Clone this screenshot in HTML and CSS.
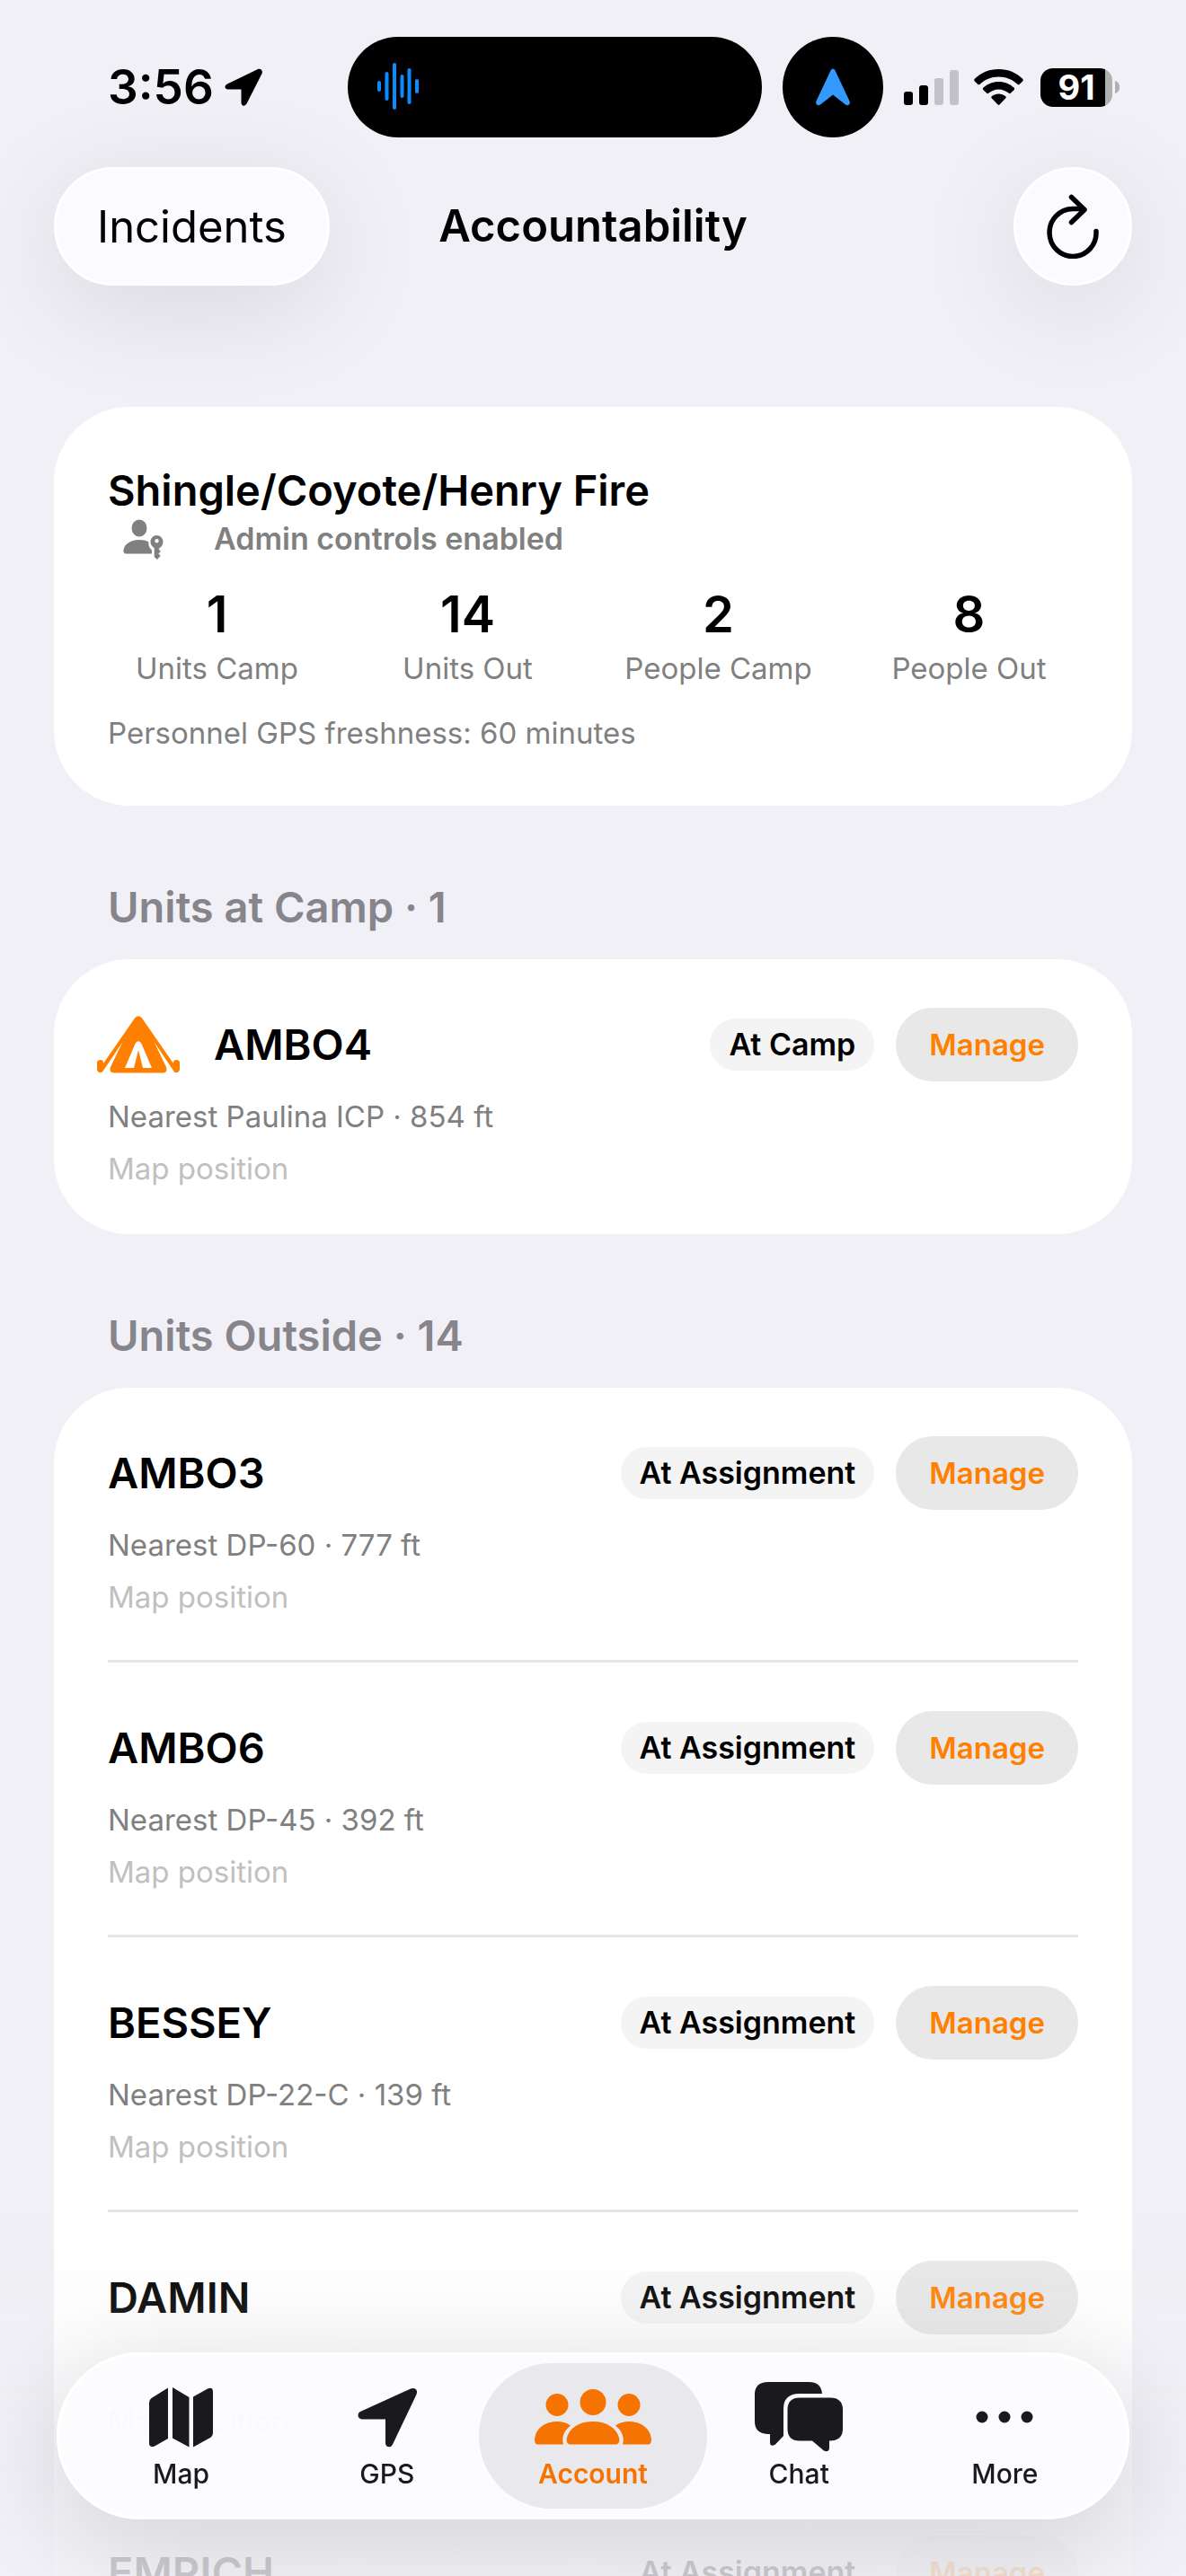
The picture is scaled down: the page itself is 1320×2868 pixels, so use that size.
FILE: index.html
```html
<!DOCTYPE html>
<html lang="en">
<head>
    <meta charset="UTF-8">
    <meta name="viewport" content="width=device-width, initial-scale=1.0">
    <title>Accountability</title>
    <link rel="stylesheet" href="styles.css">
</head>
<body>
    <!-- Status bar -->
    <div class="status-bar">
        <div class="time">
            <span>3:56</span>
            <svg width="43" height="42" viewBox="0 0 43 42"><path d="M36.500 1.200 L3 17.500 C-1 19.500 0 23.500 4 23.500 H18.500 V38 C18.500 42.500 23 43 25 38.500 L41.500 6 C43 2.500 40 -.5 36.500 1.200Z"/></svg>
        </div>
        <div class="island">
            <svg width="46" height="54" viewBox="0 0 46 54" fill="none" stroke="#0a8cff" stroke-width="4" stroke-linecap="round">
                <path d="M2 22v8M10.500 12v28M19 2v48M27.500 15v22M35.500 8v36M44 20v12"/>
            </svg>
        </div>
        <div class="nav-dot">
            <svg width="38" height="42" viewBox="0 0 38 42"><path fill="#3399ff" d="M16.500 2.500C17.500-.3 20.500-.3 21.500 2.500L37.500 36.500C39 40 36 42.500 33 40.500L19 29.500 5 40.500C2 42.500-1 40 .5 36.500Z"/></svg>
        </div>
        <svg class="signal" width="61" height="40" viewBox="0 0 61 40">
            <rect y="25" width="10" height="15" rx="3"/>
            <rect x="17" y="18" width="10" height="22" rx="3"/>
            <rect x="34" y="10" width="10" height="30" rx="3" fill="#c2c1c7"/>
            <rect x="51" y="1" width="10" height="39" rx="3" fill="#c2c1c7"/>
        </svg>
        <svg class="wifi" width="55" height="40" viewBox="0 0 55 40">
            <path d="M27.500 0C17 0 7.500 4 .8 10.800c-.8.8-.8 1.800 0 2.600l3.400 3.400c.7.700 1.700.7 2.500 0C12 11.500 19.500 8.500 27.500 8.500s15.500 3 20.800 8.300c.8.700 1.800.7 2.500 0l3.400-3.400c.8-.8.8-1.800 0-2.600C47.500 4 38 0 27.500 0Z"/>
            <path d="M27.500 14c-6.500 0-12.500 2.500-17 6.600-.8.7-.8 1.800 0 2.600l3.500 3.400c.7.700 1.700.7 2.500 0 3-2.600 6.800-4.200 11-4.200s8 1.600 11 4.200c.8.700 1.800.7 2.500 0l3.500-3.400c.8-.8.8-1.900 0-2.600-4.500-4.100-10.500-6.600-17-6.600Z"/>
            <path d="M27.500 27.500c-2.800 0-5.400 1-7.500 2.500-.9.700-.9 1.800-.1 2.600l6.400 6.700c.7.700 1.700.7 2.400 0l6.400-6.700c.8-.8.8-1.900-.1-2.600-2.100-1.500-4.700-2.500-7.500-2.500Z"/>
        </svg>
        <div class="battery">
            <span class="battery-level">91</span>
            <svg width="5" height="14" viewBox="0 0 5 14"><path fill="#b0b0b4" d="M0 0C7 2 7 12 0 14Z"/></svg>
        </div>
    </div>

    <!-- Navigation bar -->
    <header class="nav-bar">
        <button class="glass back">Incidents</button>
        <h1>Accountability</h1>
        <button class="glass refresh" aria-label="Refresh">
            <svg width="60" height="72" viewBox="0 0 60 72" fill="none" stroke="#000" stroke-width="5.500" stroke-linecap="round" stroke-linejoin="round">
                <path d="M56 41.500A26 26.500 0 1 1 30 16.500H41M28.500 3.500L43 17.500 28.500 31.500"/>
            </svg>
        </button>
    </header>

    <main>
        <section class="card summary">
            <h2>Shingle/Coyote/Henry Fire</h2>
            <div class="admin">
                <svg class="label-icon" width="92" height="48" viewBox="0 0 92 48" fill="#808080">
                    <ellipse cx="47" cy="12" rx="8.500" ry="9.500"/>
                    <path d="M33 40.500C30 40.500 29 38.500 29.500 36 31 29 38 25 47 25c4 0 7.500.8 10.300 2.300C57 32 59 35 61 36.500V40.500Z"/>
                    <path fill-rule="evenodd" d="M66.500 20c-4 0-7 3.300-7 7.300 0 3 1.700 5.600 4.200 6.700V44l3 3 4-4-2.300-2.600 2.500-2.400-2-2.200V34.500c2.700-1 4.600-4 4.600-7.200 0-4-3-7.300-7-7.300Zm0 4a2.200 2.200 0 1 1 0 4.400 2.200 2.200 0 0 1 0-4.400Z"/>
                </svg>
                <span>Admin controls enabled</span>
            </div>
            <div class="stats">
                <div class="stat"><strong>1</strong><span>Units Camp</span></div>
                <div class="stat"><strong>14</strong><span>Units Out</span></div>
                <div class="stat"><strong>2</strong><span>People Camp</span></div>
                <div class="stat"><strong>8</strong><span>People Out</span></div>
            </div>
            <p class="detail">Personnel GPS freshness: 60 minutes</p>
        </section>

        <h2 class="section-title">Units at Camp · 1</h2>
        <section class="card">
            <article class="unit">
                <div class="unit-head">
                    <svg class="label-icon" width="92" height="64" viewBox="0 0 92 64">
                        <path fill="#ff8000" fill-rule="evenodd" d="M42 2.500Q46 -2 50 2.500L85 53V51Q86 48.500 89 49 92 49.500 92 52V60Q90 65 86 62.500L63.500 29 77 57Q79 63 73 63.500H19Q13 63 15 57L28.500 29 6 62.500Q2 65 0 60V52Q0 49.500 3 49 6 48.500 7 51V53ZM43 30L31 58H41L46 38 51 58H61L49 30Q46 26.500 43 30Z"/>
                    </svg>
                    <h3>AMBO4</h3>
                    <span class="chip">At Camp</span>
                    <button class="manage">Manage</button>
                </div>
                <p class="detail">Nearest Paulina ICP · 854 ft</p>
                <p class="detail source">Map position</p>
            </article>
        </section>

        <h2 class="section-title">Units Outside · 14</h2>
        <section class="card">
            <article class="unit">
                <div class="unit-head">
                    <h3>AMBO3</h3>
                    <span class="chip">At Assignment</span>
                    <button class="manage">Manage</button>
                </div>
                <p class="detail">Nearest DP-60 · 777 ft</p>
                <p class="detail source">Map position</p>
            </article>
            <article class="unit">
                <div class="unit-head">
                    <h3>AMBO6</h3>
                    <span class="chip">At Assignment</span>
                    <button class="manage">Manage</button>
                </div>
                <p class="detail">Nearest DP-45 · 392 ft</p>
                <p class="detail source">Map position</p>
            </article>
            <article class="unit">
                <div class="unit-head">
                    <h3>BESSEY</h3>
                    <span class="chip">At Assignment</span>
                    <button class="manage">Manage</button>
                </div>
                <p class="detail">Nearest DP-22-C · 139 ft</p>
                <p class="detail source">Map position</p>
            </article>
            <article class="unit">
                <div class="unit-head">
                    <h3>DAMIN</h3>
                    <span class="chip">At Assignment</span>
                    <button class="manage">Manage</button>
                </div>
                <p class="detail"></p>
                <p class="detail source">Map position</p>
            </article>
            <article class="unit">
                <div class="unit-head">
                    <h3>EMRICH</h3>
                    <span class="chip">At Assignment</span>
                    <button class="manage">Manage</button>
                </div>
            </article>
        </section>
    </main>

    <!-- Tab bar -->
    <div class="fade"></div>
    <nav class="tab-bar">
        <a class="tab" href="#map">
            <svg width="72" height="78" viewBox="0 0 72 78">
                <path d="M0 23Q0 20 2.500 18L21 6.500V63L6 71.500Q0 73.500 0 68ZM26 6L44.500 17V72.500L26 62.500ZM49 16.500L65 7.500Q71 5 71 11V56Q71 60 68 62L49 72.500Z"/>
            </svg>
            <span>Map</span>
        </a>
        <a class="tab" href="#gps">
            <svg width="66" height="78" viewBox="0 0 66 78">
                <path d="M59 7.500L3 33C-1 35 0 41.500 5 41.500H31V68C31 73 37 74 39 69.500L65 15C68 9 64 5.500 59 7.500Z"/>
            </svg>
            <span>GPS</span>
        </a>
        <a class="tab active" href="#account" aria-current="page">
            <svg width="130" height="78" viewBox="0 0 130 78">
                <circle cx="25" cy="25.500" r="12.500"/><circle cx="105" cy="25.500" r="12.500"/><circle cx="65" cy="22.500" r="14.500"/>
                <path d="M4 69.500C0 69.500-.3 66 .3 62 2 51 12 44 25 44 31 44 36 45.500 40 48.500 32 55 30 62 32 69.500ZM126 69.500C130 69.500 130.300 66 129.700 62 128 51 118 44 105 44 99 44 94 45.500 90 48.500 98 55 100 62 98 69.500ZM40 69.500C36 69.500 35 66 36 62 39 51 50 44 65 44S91 51 94 62C95 66 94 69.500 90 69.500Z"/>
            </svg>
            <span>Account</span>
        </a>
        <a class="tab" href="#chat">
            <svg width="98" height="78" viewBox="0 0 98 78">
                <path d="M15 0H60Q74 0 75 13H50Q32 13 32 30V60L23 69.500Q17 73 17 67V58H14Q0 57 0 44V14Q0 0 15 0Z"/>
                <path d="M50 17.500H84Q98 17.500 98 31V52Q98 65.500 83 65.500V74Q82 79 77 76.500L64 65.500H50Q36.500 65.500 36.500 52V31Q36.500 17.500 50 17.500Z"/>
            </svg>
            <span>Chat</span>
        </a>
        <a class="tab" href="#more">
            <svg width="64" height="78" viewBox="0 0 64 78">
                <circle cx="7" cy="39" r="6.500"/><circle cx="32" cy="39" r="6.500"/><circle cx="57" cy="39" r="6.500"/>
            </svg>
            <span>More</span>
        </a>
    </nav>
</body>
</html>
```
FILE: styles.css
```css
* {
    box-sizing: border-box;
}
body {
    margin: 0;
    height: 100vh;
    overflow: hidden;
    background-color: #f1f0f6;
    color: #000;
    font-family: Inter, "Liberation Sans", sans-serif;
    font-size: 33px;
    line-height: 48px;
}
h1, h2, h3, p {
    margin: 0;
}
h1, h2, h3 {
    font-size: 47px;
    font-weight: 600;
    line-height: 60px;
}
button {
    border: none;
    font-family: inherit;
    cursor: pointer;
}
svg {
    display: block;
    flex: none;
}

/* status bar */
.status-bar {
    display: flex;
    align-items: center;
    padding: 41px 74px 0 120px;
}
.time {
    flex: 1;
    display: flex;
    align-items: center;
    gap: 12px;
    font-size: 53px;
    font-weight: 600;
}
.island {
    display: flex;
    align-items: center;
    width: 461px;
    height: 112px;
    padding-left: 33px;
    border-radius: 56px;
    background-color: #000;
}
.nav-dot {
    display: flex;
    align-items: center;
    justify-content: center;
    width: 112px;
    height: 112px;
    margin: 0 23px;
    border-radius: 50%;
    background-color: #000;
}
.wifi {
    margin: 0 19px 0 17px;
}
.battery {
    display: flex;
    align-items: center;
    gap: 3px;
}
.battery-level {
    width: 80px;
    border-radius: 14px;
    background: linear-gradient(to right, #000 72px, #b0b0b0 72px);
    color: #fff;
    font-size: 38px;
    font-weight: 700;
    line-height: 43px;
    text-align: center;
}

/* navigation bar */
.nav-bar {
    display: grid;
    grid-template-columns: 1fr auto 1fr;
    align-items: center;
    padding: 33px 60px 0;
}
.nav-bar h1 {
    font-size: 49px;
}
.glass {
    height: 132px;
    border: 3px solid #fff;
    border-radius: 66px;
    background-color: #fbfaff;
    box-shadow: 0 24px 120px rgba(0, 0, 0, 0.1);
    color: #000;
}
.back {
    justify-self: start;
    padding: 0 45px;
    font-size: 49px;
}
.refresh {
    display: flex;
    align-items: center;
    justify-content: center;
    justify-self: end;
    width: 132px;
    padding: 0;
}

/* cards */
main {
    padding: 135px 60px 0;
}
.card {
    padding: 0 60px;
    border-radius: 84px;
    background-color: #fff;
}
.summary {
    padding: 63px 60px 57px;
}
.label-icon {
    margin: 0 38px 0 -12px;
}
.admin {
    display: flex;
    color: #808080;
    font-size: 34px;
    font-weight: 600;
}
.stats {
    display: grid;
    grid-template-columns: repeat(4, 1fr);
    gap: 36px;
    margin: 24px 0;
    text-align: center;
}
.stat strong {
    display: block;
    font-size: 56px;
    font-weight: 600;
    line-height: 72px;
}
.stat span {
    color: #808080;
}
.detail {
    min-height: 48px;
    color: #808080;
}
.section-title {
    margin: 83px 60px 28px;
    color: #85858b;
}

/* unit rows */
.unit {
    padding: 54px 0 49px;
}
.unit + .unit {
    box-shadow: 0 -3px #e6e6e6;
}
.unit-head {
    display: flex;
    align-items: center;
    margin-bottom: 15px;
}
.unit-head h3 {
    flex: 1;
}
.chip {
    margin-right: 24px;
    padding: 5px 21px;
    border-radius: 29px;
    background-color: #f4f4f4;
    font-size: 34px;
    font-weight: 600;
}
.manage {
    height: 82px;
    padding: 0 37px;
    border-radius: 41px;
    background-color: #e8e8e8;
    color: #ff8000;
    font-size: 33px;
    font-weight: 600;
}
.source {
    margin-top: 10px;
    color: #c0c0c0;
}

/* tab bar floats over the list */
.fade {
    position: fixed;
    left: 0;
    right: 0;
    bottom: 0;
    height: 400px;
    background: linear-gradient(rgba(241, 240, 246, 0), rgba(241, 240, 246, 0.1) 25%, rgba(241, 240, 246, 0.84) 90%);
}
.tab-bar {
    position: fixed;
    left: 63px;
    right: 63px;
    bottom: 63px;
    display: grid;
    grid-template-columns: repeat(5, 1fr);
    height: 186px;
    padding: 9px 21px;
    border: 3px solid #fff;
    border-radius: 93px;
    background-color: rgba(252, 252, 255, 0.93);
    box-shadow: 0 24px 120px rgba(0, 0, 0, 0.14);
}
.tab {
    display: flex;
    flex-direction: column;
    align-items: center;
    margin: 0 -12px;
    padding-top: 21px;
    border-radius: 81px;
    color: #1a1a1e;
    fill: #1a1a1e;
    font-size: 30px;
    font-weight: 500;
    line-height: 48px;
    text-decoration: none;
}
.tab.active {
    background-color: #e9e9ed;
    color: #f57300;
    fill: #f57300;
    font-weight: 600;
}
```
